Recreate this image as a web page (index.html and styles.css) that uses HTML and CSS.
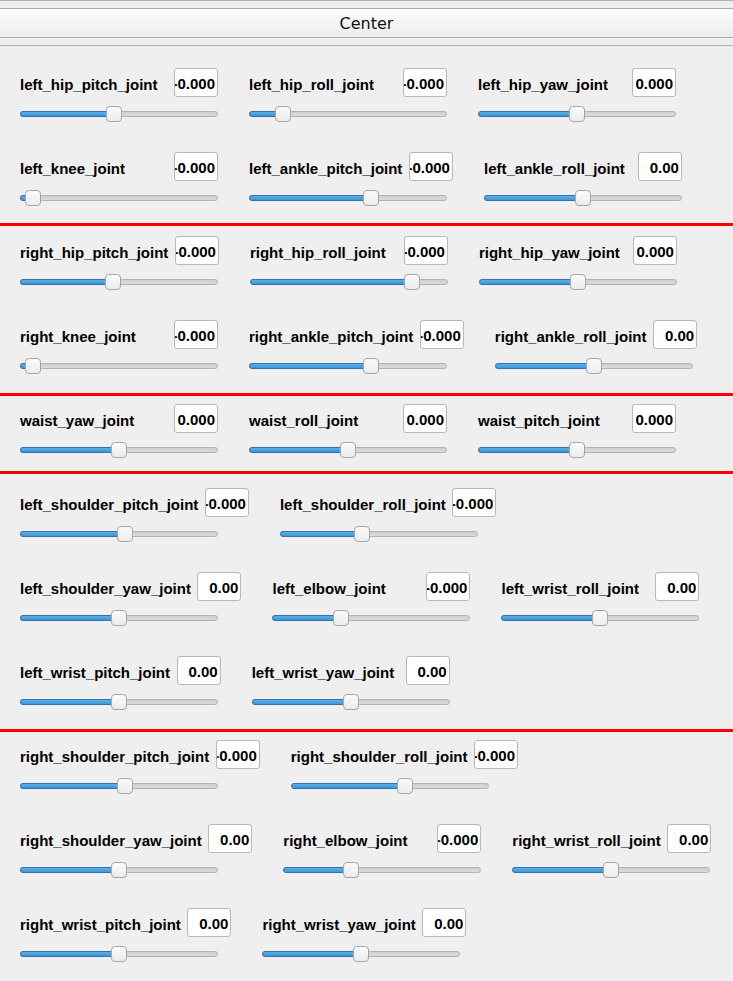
FILE: index.html
```html
<!DOCTYPE html>
<html>
<head>
<meta charset="utf-8">
<link rel="stylesheet" href="styles.css">
</head>
<body>
<div class="top-rule"></div>
<div class="center-bar"><button class="center-btn">Center</button></div>
<div class="rule"></div>

<div class="group g1">
  <div class="row">
    <div class="joint"><div class="head"><span class="name">left_hip_pitch_joint</span><span class="val"><span>-0.000</span></span></div><div class="slider" style="--v:86px"><div class="track"></div><div class="fill"></div><div class="knob"></div></div></div>
    <div class="joint"><div class="head"><span class="name">left_hip_roll_joint</span><span class="val"><span>-0.000</span></span></div><div class="slider" style="--v:26px"><div class="track"></div><div class="fill"></div><div class="knob"></div></div></div>
    <div class="joint"><div class="head"><span class="name">left_hip_yaw_joint</span><span class="val"><span>0.000</span></span></div><div class="slider" style="--v:91px"><div class="track"></div><div class="fill"></div><div class="knob"></div></div></div>
  </div>
  <div class="row">
    <div class="joint"><div class="head"><span class="name">left_knee_joint</span><span class="val"><span>-0.000</span></span></div><div class="slider" style="--v:5px"><div class="track"></div><div class="fill"></div><div class="knob"></div></div></div>
    <div class="joint"><div class="head"><span class="name">left_ankle_pitch_joint</span><span class="val"><span>-0.000</span></span></div><div class="slider" style="--v:114px"><div class="track"></div><div class="fill"></div><div class="knob"></div></div></div>
    <div class="joint"><div class="head"><span class="name">left_ankle_roll_joint</span><span class="val"><span>0.00</span></span></div><div class="slider" style="--v:91px"><div class="track"></div><div class="fill"></div><div class="knob"></div></div></div>
  </div>
</div>
<div class="sep"></div>

<div class="group g2">
  <div class="row">
    <div class="joint"><div class="head"><span class="name">right_hip_pitch_joint</span><span class="val"><span>-0.000</span></span></div><div class="slider" style="--v:85px"><div class="track"></div><div class="fill"></div><div class="knob"></div></div></div>
    <div class="joint"><div class="head"><span class="name">right_hip_roll_joint</span><span class="val"><span>-0.000</span></span></div><div class="slider" style="--v:154px"><div class="track"></div><div class="fill"></div><div class="knob"></div></div></div>
    <div class="joint"><div class="head"><span class="name">right_hip_yaw_joint</span><span class="val"><span>0.000</span></span></div><div class="slider" style="--v:91px"><div class="track"></div><div class="fill"></div><div class="knob"></div></div></div>
  </div>
  <div class="row">
    <div class="joint"><div class="head"><span class="name">right_knee_joint</span><span class="val"><span>-0.000</span></span></div><div class="slider" style="--v:5px"><div class="track"></div><div class="fill"></div><div class="knob"></div></div></div>
    <div class="joint"><div class="head"><span class="name">right_ankle_pitch_joint</span><span class="val"><span>-0.000</span></span></div><div class="slider" style="--v:114px"><div class="track"></div><div class="fill"></div><div class="knob"></div></div></div>
    <div class="joint"><div class="head"><span class="name">right_ankle_roll_joint</span><span class="val"><span>0.00</span></span></div><div class="slider" style="--v:91px"><div class="track"></div><div class="fill"></div><div class="knob"></div></div></div>
  </div>
</div>
<div class="sep"></div>

<div class="group g3">
  <div class="row">
    <div class="joint"><div class="head"><span class="name">waist_yaw_joint</span><span class="val"><span>0.000</span></span></div><div class="slider" style="--v:91px"><div class="track"></div><div class="fill"></div><div class="knob"></div></div></div>
    <div class="joint"><div class="head"><span class="name">waist_roll_joint</span><span class="val"><span>0.000</span></span></div><div class="slider" style="--v:91px"><div class="track"></div><div class="fill"></div><div class="knob"></div></div></div>
    <div class="joint"><div class="head"><span class="name">waist_pitch_joint</span><span class="val"><span>0.000</span></span></div><div class="slider" style="--v:91px"><div class="track"></div><div class="fill"></div><div class="knob"></div></div></div>
  </div>
</div>
<div class="sep"></div>

<div class="group g4">
  <div class="row">
    <div class="joint"><div class="head"><span class="name">left_shoulder_pitch_joint</span><span class="val"><span>-0.000</span></span></div><div class="slider" style="--v:97px"><div class="track"></div><div class="fill"></div><div class="knob"></div></div></div>
    <div class="joint"><div class="head"><span class="name">left_shoulder_roll_joint</span><span class="val"><span>-0.000</span></span></div><div class="slider" style="--v:74px"><div class="track"></div><div class="fill"></div><div class="knob"></div></div></div>
  </div>
  <div class="row">
    <div class="joint"><div class="head"><span class="name">left_shoulder_yaw_joint</span><span class="val"><span>0.00</span></span></div><div class="slider" style="--v:91px"><div class="track"></div><div class="fill"></div><div class="knob"></div></div></div>
    <div class="joint"><div class="head"><span class="name">left_elbow_joint</span><span class="val"><span>-0.000</span></span></div><div class="slider" style="--v:61px"><div class="track"></div><div class="fill"></div><div class="knob"></div></div></div>
    <div class="joint"><div class="head"><span class="name">left_wrist_roll_joint</span><span class="val"><span>0.00</span></span></div><div class="slider" style="--v:91px"><div class="track"></div><div class="fill"></div><div class="knob"></div></div></div>
  </div>
  <div class="row">
    <div class="joint"><div class="head"><span class="name">left_wrist_pitch_joint</span><span class="val"><span>0.00</span></span></div><div class="slider" style="--v:91px"><div class="track"></div><div class="fill"></div><div class="knob"></div></div></div>
    <div class="joint"><div class="head"><span class="name">left_wrist_yaw_joint</span><span class="val"><span>0.00</span></span></div><div class="slider" style="--v:91px"><div class="track"></div><div class="fill"></div><div class="knob"></div></div></div>
  </div>
</div>
<div class="sep"></div>

<div class="group g5">
  <div class="row">
    <div class="joint"><div class="head"><span class="name">right_shoulder_pitch_joint</span><span class="val"><span>-0.000</span></span></div><div class="slider" style="--v:97px"><div class="track"></div><div class="fill"></div><div class="knob"></div></div></div>
    <div class="joint"><div class="head"><span class="name">right_shoulder_roll_joint</span><span class="val"><span>-0.000</span></span></div><div class="slider" style="--v:106px"><div class="track"></div><div class="fill"></div><div class="knob"></div></div></div>
  </div>
  <div class="row">
    <div class="joint"><div class="head"><span class="name">right_shoulder_yaw_joint</span><span class="val"><span>0.00</span></span></div><div class="slider" style="--v:91px"><div class="track"></div><div class="fill"></div><div class="knob"></div></div></div>
    <div class="joint"><div class="head"><span class="name">right_elbow_joint</span><span class="val"><span>-0.000</span></span></div><div class="slider" style="--v:60px"><div class="track"></div><div class="fill"></div><div class="knob"></div></div></div>
    <div class="joint"><div class="head"><span class="name">right_wrist_roll_joint</span><span class="val"><span>0.00</span></span></div><div class="slider" style="--v:91px"><div class="track"></div><div class="fill"></div><div class="knob"></div></div></div>
  </div>
  <div class="row">
    <div class="joint"><div class="head"><span class="name">right_wrist_pitch_joint</span><span class="val"><span>0.00</span></span></div><div class="slider" style="--v:91px"><div class="track"></div><div class="fill"></div><div class="knob"></div></div></div>
    <div class="joint"><div class="head"><span class="name">right_wrist_yaw_joint</span><span class="val"><span>0.00</span></span></div><div class="slider" style="--v:91px"><div class="track"></div><div class="fill"></div><div class="knob"></div></div></div>
  </div>
</div>
</body>
</html>
```
FILE: styles.css
```css
* { box-sizing: border-box; }
html, body {
  margin: 0;
  padding: 0;
  background: #efefef;
  overflow: hidden;
}
body {
  font-family: "Liberation Sans", Arial, sans-serif;
  color: #000;
}
.top-rule {
  height: 1px;
  background: #b2b2b2;
}
.center-bar {
  padding: 7px 0;
}
.center-btn {
  display: block;
  width: 100%;
  height: 30px;
  margin: 0;
  padding: 0;
  border: 0;
  border-top: 1px solid #aaaaaa;
  border-bottom: 1px solid #aaaaaa;
  background: linear-gradient(#fdfdfd, #ececec);
  font-family: "DejaVu Sans", sans-serif;
  font-size: 16px;
  color: #111;
  text-align: center;
}
.rule {
  height: 1px;
  background: #b2b2b2;
}
.group {
  display: flex;
  flex-direction: column;
  gap: 30px;
  padding-left: 20px;
}
.g1 { padding-top: 22px; padding-bottom: 17px; }
.g2 { padding-top: 10px; padding-bottom: 19px; }
.g3 { padding-top: 8px; padding-bottom: 13px; }
.g4 { padding-top: 14px; padding-bottom: 19px; }
.g5 { padding-top: 8px; }
.sep {
  height: 3px;
  background: #ff0000;
}
.row {
  display: flex;
  gap: 31px;
}
.joint {
  display: flex;
  flex-direction: column;
  width: max-content;
  min-width: 198px;
}
.head {
  display: flex;
  align-items: center;
  gap: 6.6px;
  height: 29px;
}
.name {
  flex: 1;
  white-space: nowrap;
  font-weight: bold;
  font-size: 15px;
  padding-top: 3px;
}
.val {
  flex: none;
  width: 44px;
  height: 29px;
  border: 1px solid #b8b8b8;
  border-radius: 3px;
  background: #fff;
  display: flex;
  align-items: center;
  justify-content: flex-end;
  padding: 2px 2px 0 0;
  overflow: hidden;
  font-weight: bold;
  font-size: 15px;
  white-space: nowrap;
}
.slider {
  position: relative;
  width: 198px;
  height: 16px;
  margin-top: 9px;
}
.track {
  position: absolute;
  left: 0;
  right: 0;
  top: 5px;
  height: 6px;
  border: 1px solid #b3b3b3;
  border-radius: 3px;
  background: linear-gradient(#cfcfcf, #dcdcdc);
}
.fill {
  position: absolute;
  left: 0;
  top: 5px;
  height: 6px;
  width: calc(var(--v) + 8px);
  border: 1px solid #3673a8;
  border-radius: 3px;
  background: linear-gradient(#5cb0ea, #3a96d8);
}
.knob {
  position: absolute;
  top: 0;
  left: var(--v);
  width: 16px;
  height: 16px;
  border: 1px solid #a6a6a6;
  border-radius: 4px;
  background: linear-gradient(#fafafa, #ececec);
}
```
